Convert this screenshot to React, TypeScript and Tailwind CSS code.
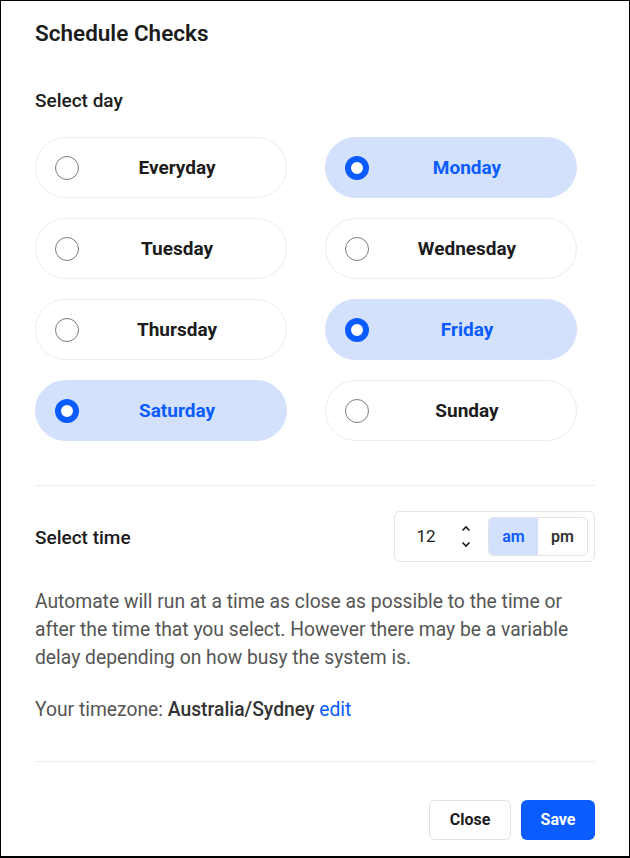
import React, { useState } from 'react';

const DAYS = ['Everyday', 'Monday', 'Tuesday', 'Wednesday', 'Thursday', 'Friday', 'Saturday', 'Sunday'];

const DayPill: React.FC<{ label: string; selected: boolean; onClick: () => void }> = ({ label, selected, onClick }) => (
  <button
    onClick={onClick}
    className={`flex h-[61px] items-center rounded-full border pl-[19px] pr-[11px] ${
      selected ? 'border-[#d4e1fc] bg-[#d4e1fc]' : 'border-[#ececec] bg-white'
    }`}
  >
    {selected ? (
      <span className="h-6 w-6 shrink-0 rounded-full border-[6px] border-[#0a5cff] bg-white" />
    ) : (
      <span className="h-6 w-6 shrink-0 rounded-full border border-[#7a7a7a] bg-white" />
    )}
    <span className={`flex-1 pt-px text-center text-[19px] font-bold ${selected ? 'text-[#0a5cff]' : 'text-[#1c1c1c]'}`}>
      {label}
    </span>
  </button>
);

export default function App() {
  const [days, setDays] = useState<string[]>(['Monday', 'Friday', 'Saturday']);
  const [hour, setHour] = useState(12);
  const [ampm, setAmpm] = useState<'am' | 'pm'>('am');

  const toggle = (d: string) =>
    setDays(prev => (prev.includes(d) ? prev.filter(x => x !== d) : [...prev, d]));

  return (
    <div className="h-[858px] w-[630px] border border-b-2 border-black bg-white px-[34px] pt-[18px] font-['Roboto',sans-serif] text-[#1c1c1c]">
      <h1 className="text-[22.5px] font-semibold leading-[28px]">Schedule Checks</h1>

      <div className="mt-[42px] text-[19px] font-medium leading-[24px]">Select day</div>

      <div className="mt-[24px] grid grid-cols-[252px_252px] gap-x-[38px] gap-y-[20px]">
        {DAYS.map(d => (
          <DayPill key={d} label={d} selected={days.includes(d)} onClick={() => toggle(d)} />
        ))}
      </div>

      <div className="mt-[44px] h-px bg-[#eeeeee]" />

      <div className="mt-[25px] flex items-center justify-between">
        <span className="pt-[3px] text-[19px] font-medium">Select time</span>
        <div className="flex h-[51px] w-[201px] items-center rounded-md border border-[#e4e4e4] pl-[14px] pr-[6px]">
          <span className="w-[34px] text-center text-[17px] text-[#1c1c1c]">{hour}</span>
          <div className="ml-[10px] flex w-[26px] flex-col items-center gap-[9px]">
            <button onClick={() => setHour(h => (h % 12) + 1)} className="text-[#1c1c1c]">
              <svg width="10" height="7" viewBox="0 0 10 7" fill="none" stroke="currentColor" strokeWidth="1.6">
                <path d="M1.5 5.5 5 2l3.5 3.5" />
              </svg>
            </button>
            <button onClick={() => setHour(h => ((h + 10) % 12) + 1)} className="text-[#1c1c1c]">
              <svg width="10" height="7" viewBox="0 0 10 7" fill="none" stroke="currentColor" strokeWidth="1.6">
                <path d="M1.5 1.5 5 5l3.5-3.5" />
              </svg>
            </button>
          </div>
          <div className="ml-auto flex h-[39px] overflow-hidden rounded-[5px] border border-[#e4e4e4]">
            <button
              onClick={() => setAmpm('am')}
              className={`w-[49px] text-[16px] font-semibold ${ampm === 'am' ? 'bg-[#d4e1fc] text-[#0a5cff]' : 'text-[#333333]'}`}
            >
              am
            </button>
            <button
              onClick={() => setAmpm('pm')}
              className={`w-[49px] text-[16px] font-semibold ${ampm === 'pm' ? 'bg-[#d4e1fc] text-[#0a5cff]' : 'text-[#333333]'}`}
            >
              pm
            </button>
          </div>
        </div>
      </div>

      <p className="mt-[26px] text-[19.3px] leading-[28px] text-[#555555]">
        Automate will run at a time as close as possible to the time or after the time that you select. However
        there may be a variable delay depending on how busy the system is.
      </p>

      <p className="mt-6 text-[19.3px] leading-[28px] text-[#555555]">
        Your timezone: <span className="font-medium text-[#333333]">Australia/Sydney</span>{' '}
        <a className="text-[#0a5cff]">edit</a>
      </p>

      <div className="mt-[37px] h-px bg-[#eeeeee]" />

      <div className="mt-[38px] flex justify-end gap-[10px]">
        <button className="h-10 w-[82px] rounded-md border border-[#e2e2e2] bg-white text-[16px] font-bold text-[#1c1c1c]">
          Close
        </button>
        <button className="h-10 w-[74px] rounded-md bg-[#0a5cff] text-[16px] font-bold text-white">Save</button>
      </div>
    </div>
  );
}
